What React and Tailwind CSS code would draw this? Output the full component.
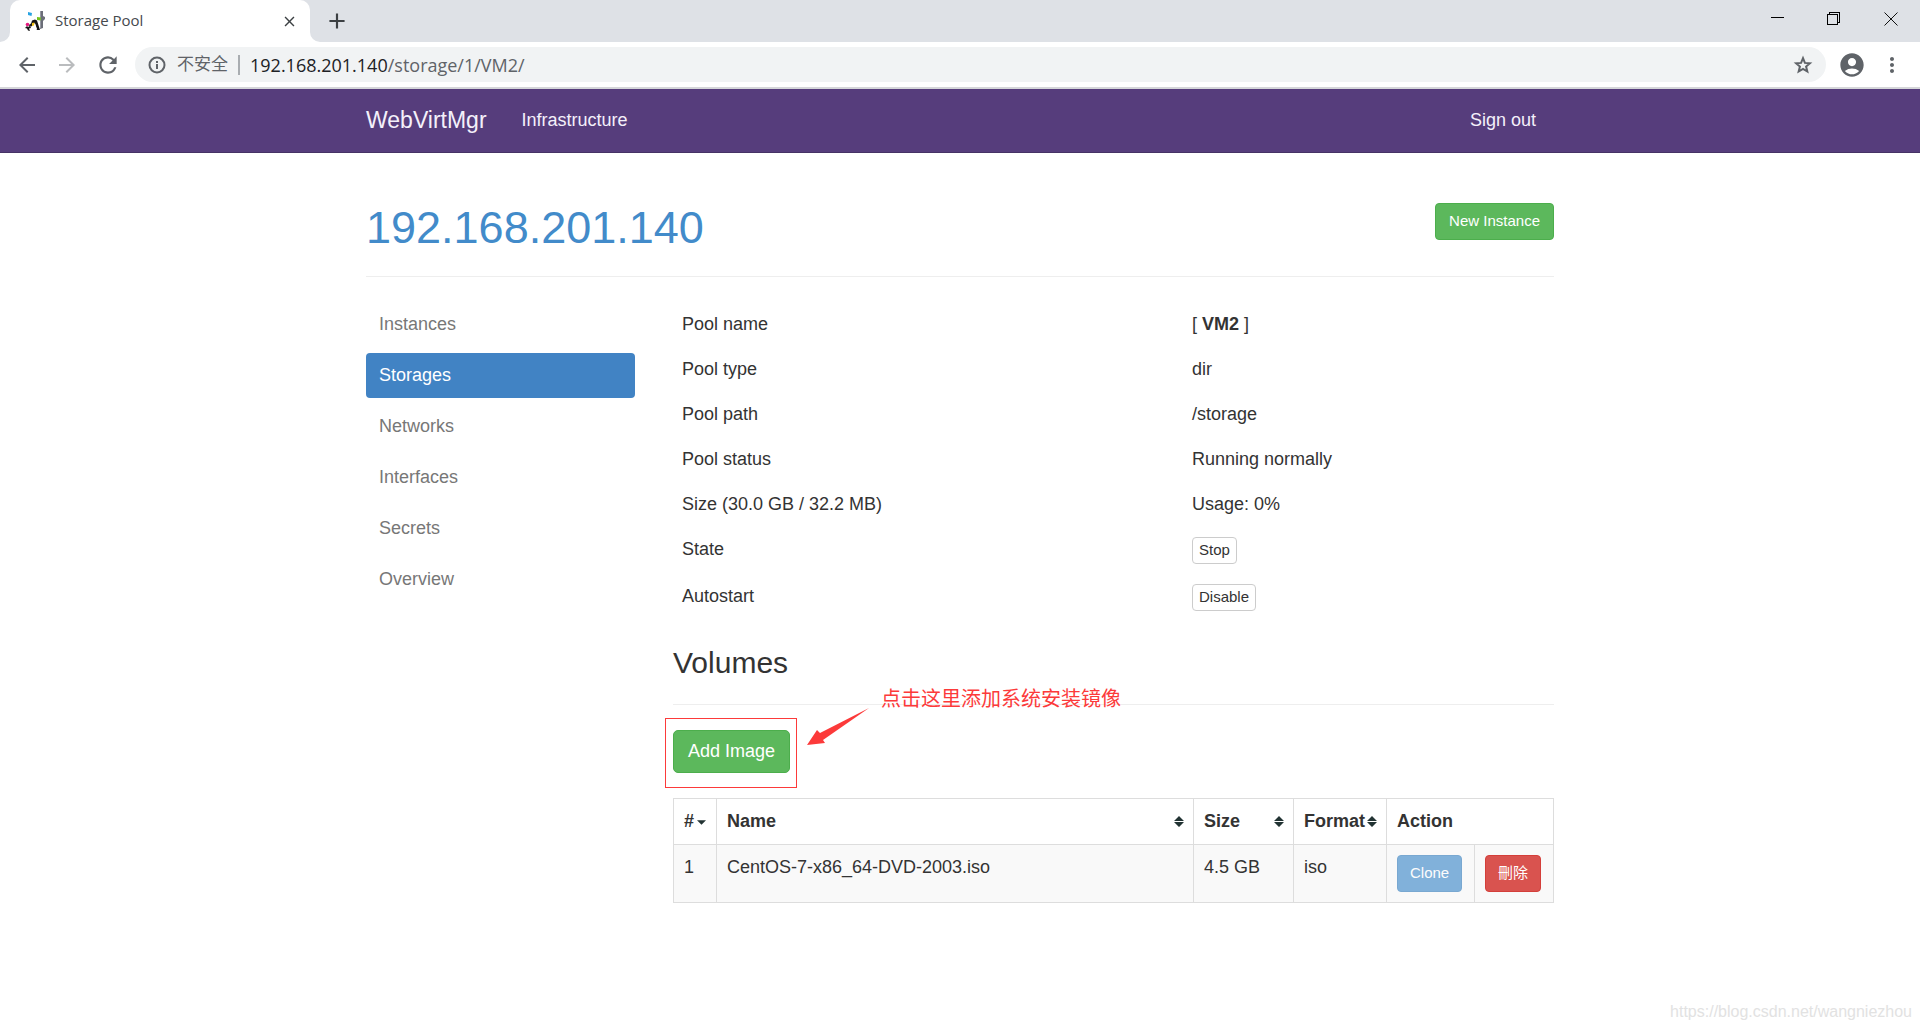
import {
  MdAccountCircle,
  MdAdd,
  MdArrowBack,
  MdArrowForward,
  MdClose,
  MdMoreVert,
  MdRefresh,
} from 'react-icons/md'

const menu = ['Instances', 'Storages', 'Networks', 'Interfaces', 'Secrets', 'Overview']

const smallButton = 'rounded-[4px] border border-[#ccc] bg-white px-1.5 pb-0.5 text-[15px] leading-[23px] text-[#333]'

const poolInfo = [
  { label: 'Pool name', value: <>[ <strong>VM2</strong> ]</> },
  { label: 'Pool type', value: 'dir' },
  { label: 'Pool path', value: '/storage' },
  { label: 'Pool status', value: 'Running normally' },
  { label: 'Size (30.0 GB / 32.2 MB)', value: 'Usage: 0%' },
  { label: 'State', value: <button type="button" className={smallButton}>Stop</button> },
  { label: 'Autostart', value: <button type="button" className={smallButton}>Disable</button> },
]

const volumes = [{ id: 1, name: 'CentOS-7-x86_64-DVD-2003.iso', size: '4.5 GB', format: 'iso' }]

function Favicon() {
  return (
    <svg width="20" height="20" viewBox="0 0 20 20" aria-hidden="true">
      <path d="M15 0h3v5l2 1v2l-2 2v7l-3 1z" fill="#6b6e78" />
      <path d="M15 0h1v17h-1z" fill="#9497a1" />
      <path d="M3 1l4 1-.5 3L3 4z" fill="#27a3e2" />
      <path d="M12 6l4 .5-.5 3-3.500-.5z" fill="#76c21c" />
      <path d="M7 9.500l3-1 2 1 3 9.500h-3.500l.5-1-2-5.500-1.500 0-2 3-1-1z" fill="#151515" />
      <path d="M0 17l2-2 1 1 2-1 1 2-2 .5 1 2.500-2-.5-1-2z" fill="#151515" />
      <path d="M8 13l2-.5 1.500 5.500-2 1-3-2z" fill="#fff" />
      <circle cx="2.500" cy="13.500" r="1.800" fill="#e5197f" />
      <path d="M4 14l2.500-2v3l-2 1z" fill="#222" />
      <path d="M7 12l2.500-.5-.5 3-2 .5z" fill="#f3c416" />
    </svg>
  )
}

function InfoIcon() {
  return (
    <svg width="20" height="20" viewBox="0 0 20 20" fill="none" stroke="currentColor" strokeWidth="2" aria-hidden="true">
      <circle cx="10" cy="10" r="7.500" />
      <path d="M10 9v5M10 6v2" />
    </svg>
  )
}

function StarIcon() {
  return (
    <svg width="22" height="22" viewBox="0 0 22 22" fill="none" stroke="currentColor" strokeWidth="2" aria-hidden="true">
      <path d="M11 4.200l1.900 4.700 5 .4-3.800 3.300 1.200 4.900-4.300-2.600-4.300 2.600 1.200-4.900-3.800-3.300 5-.4z" />
    </svg>
  )
}

function TabBar() {
  return (
    <div className="flex h-[42px] items-stretch bg-[#dee1e6] pl-[10px]">
      <div className="relative flex w-[300px] items-center rounded-t-[10px] bg-white pr-3 pl-[15px]">
        <svg className="absolute bottom-0 -left-[10px]" width="10" height="10" aria-hidden="true">
          <path d="M10 0v10H0A10 10 0 0 0 10 0z" fill="#fff" />
        </svg>
        <svg className="absolute -right-[10px] bottom-0" width="10" height="10" aria-hidden="true">
          <path d="M0 0v10h10A10 10 0 0 1 0 0z" fill="#fff" />
        </svg>
        <Favicon />
        <span className="ml-[10px] flex-1 font-['Open_Sans',sans-serif] text-[15px] text-[#45494d]">Storage Pool</span>
        <button type="button" aria-label="Close tab">
          <MdClose size={17} color="#3c4043" />
        </button>
      </div>
      <button type="button" aria-label="New tab" className="ml-[14px]">
        <MdAdd size={26} color="#3c4043" />
      </button>
      <div className="mr-[22px] ml-auto flex h-[37px] items-center gap-[43px]">
        <button type="button" aria-label="Minimize">
          <svg width="13" height="13" shapeRendering="crispEdges"><path d="M0 5h13v1H0z" /></svg>
        </button>
        <button type="button" aria-label="Restore">
          <svg width="14" height="14" fill="none" stroke="#000" shapeRendering="crispEdges">
            <path d="M.5 2.500h10v10H.5zM2.500 2V.5h10v10H11" />
          </svg>
        </button>
        <button type="button" aria-label="Close">
          <svg width="14" height="14" stroke="#111"><path d="M.5 .5l13 13M13.500 .5l-13 13" /></svg>
        </button>
      </div>
    </div>
  )
}

function AddressBar() {
  return (
    <div className="flex h-[47px] items-center border-b-2 border-[#d5d6d9] bg-white pr-4 pl-[15px] text-[#5f6368]">
      <div className="flex items-center gap-4">
        <button type="button" aria-label="Back"><MdArrowBack size={24} /></button>
        <button type="button" aria-label="Forward" className="text-[#babcbe]"><MdArrowForward size={24} /></button>
        <button type="button" aria-label="Reload"><MdRefresh size={26} /></button>
      </div>
      <div className="ml-[14px] flex h-[35px] flex-1 items-center rounded-full bg-[#f1f3f4] pr-3 pl-3 font-['Open_Sans','Noto_Sans_CJK_SC',sans-serif]">
        <InfoIcon />
        <span className="ml-[10px] text-[17px]">不安全</span>
        <span className="mx-[10px] h-5 w-0.5 bg-[#a9adb1]" />
        <span className="flex-1 text-lg leading-6">
          <span className="text-[#202124]">192.168.201.140</span>/storage/1/VM2/
        </span>
        <button type="button" aria-label="Bookmark"><StarIcon /></button>
      </div>
      <button type="button" aria-label="Profile" className="ml-3"><MdAccountCircle size={28} /></button>
      <button type="button" aria-label="Menu" className="ml-[14px]"><MdMoreVert size={24} /></button>
    </div>
  )
}

function Navbar() {
  return (
    <nav className="border-b border-[#463265] bg-[#563d7c] text-[#f4f0fa]">
      <div className="mx-auto flex h-[63px] max-w-[1188px] items-center text-lg">
        <a href="#home" className="text-[23px]">WebVirtMgr</a>
        <a href="#infrastructure" className="ml-[35px] pb-0.5">Infrastructure</a>
        <a href="#logout" className="mr-[18px] ml-auto pb-0.5">Sign out</a>
      </div>
    </nav>
  )
}

function Sidebar() {
  return (
    <ul className="flex w-[269px] shrink-0 flex-col gap-1.5">
      {menu.map((item) => (
        <li key={item}>
          <a
            href={`#${item.toLowerCase()}`}
            className={`block rounded-[4px] px-[13px] py-[10px] leading-[25px] ${
              item === 'Storages' ? 'bg-[#4183c4] text-white' : 'text-[#777]'
            }`}
          >
            {item}
          </a>
        </li>
      ))}
    </ul>
  )
}

function SortIcon({ sorted }) {
  return (
    <svg width="10" height="12" viewBox="0 0 10 12" fill="#233" aria-hidden="true">
      {sorted ? <path d="M0 4h10L5 9z" /> : <path d="M0 5h10L5 0zM0 6h10L5 11z" />}
    </svg>
  )
}

function VolumeTable() {
  const head = 'border border-[#ddd] p-[10px] text-left font-bold'
  const cell = 'border border-[#ddd] p-[10px] align-top'
  const action = 'rounded-[4px] border px-3 pb-0.5 text-[15px] leading-[33px] text-white'

  return (
    <table className="mt-[25px] w-full table-fixed border-collapse leading-[25px]">
      <colgroup>
        <col className="w-[43px]" />
        <col />
        <col className="w-[100px]" />
        <col className="w-[93px]" />
        <col className="w-[88px]" />
        <col className="w-[79px]" />
      </colgroup>
      <thead>
        <tr>
          <th className={head}>
            <span className="flex items-center gap-[3px]"># <SortIcon sorted /></span>
          </th>
          {['Name', 'Size', 'Format'].map((title) => (
            <th key={title} className="border border-[#ddd] py-[10px] pr-[9px] pl-[10px] text-left font-bold">
              <span className="flex items-center justify-between">{title} <SortIcon /></span>
            </th>
          ))}
          <th className={head} colSpan={2}>Action</th>
        </tr>
      </thead>
      <tbody>
        {volumes.map((v) => (
          <tr key={v.id} className="bg-[#f9f9f9]">
            <td className={cell}>{v.id}</td>
            <td className={cell}>{v.name}</td>
            <td className={cell}>{v.size}</td>
            <td className={cell}>{v.format}</td>
            <td className={cell}>
              <button type="button" className={`${action} block border-[#357ebd] bg-[#428bca] opacity-65`}>Clone</button>
            </td>
            <td className={cell}>
              <button type="button" className={`${action} block border-[#d43f3a] bg-[#d9534f]`}>刪除</button>
            </td>
          </tr>
        ))}
      </tbody>
    </table>
  )
}

function AddImage() {
  return (
    <div className="relative mt-[25px] w-fit">
      <button
        type="button"
        className="block rounded-[5px] border border-[#4cae4c] bg-[#5cb85c] px-[14px] leading-[41px] text-white"
      >
        Add Image
      </button>
      {/* callout over the button */}
      <span className="pointer-events-none absolute -top-3 -right-[7px] -bottom-[15px] -left-2 border border-[#fc3a3a]" />
      <svg className="absolute -top-[23px] left-[134px]" width="62" height="38" aria-hidden="true">
        <path d="M0 38L10 23l3 3L62 1 16 33l2 3z" fill="#fc3a3a" />
      </svg>
      <span className="absolute -top-[41px] left-[208px] text-xl leading-5 whitespace-nowrap text-[#fc3a3a]">
        点击这里添加系统安装镜像
      </span>
    </div>
  )
}

export default function App() {
  return (
    <div className="relative min-h-screen bg-white font-['Liberation_Sans','Noto_Sans_CJK_SC',sans-serif] text-lg text-[#333]">
      <header>
        <TabBar />
        <AddressBar />
      </header>
      <Navbar />
      <div className="mx-auto max-w-[1188px]">
        <div className="mt-[50px] flex items-start justify-between border-b border-[#eee] pb-[23px]">
          <h1 className="text-[45px] leading-[50px]">
            <a href="#host" className="text-[#428bca]">192.168.201.140</a>
          </h1>
          <button
            type="button"
            className="rounded-[4px] border border-[#4cae4c] bg-[#5cb85c] px-[13px] pb-0.5 text-[15px] leading-[33px] text-white"
          >
            New Instance
          </button>
        </div>
        <div className="mt-[25px] flex gap-[38px]">
          <Sidebar />
          <main className="min-w-0 flex-1">
            <table className="w-full table-fixed leading-[25px]">
              <tbody>
                {poolInfo.map((row) => (
                  <tr key={row.label}>
                    <td className="w-[509px] py-[10px] pr-[10px] pl-[9px] align-top">{row.label}</td>
                    <td className="p-[10px] align-top">
                      <div className="flex whitespace-pre">
                        <span className="flex">{row.value}</span>
                      </div>
                    </td>
                  </tr>
                ))}
              </tbody>
            </table>
            <h2 className="mt-[25px] border-b border-[#eee] pb-[25px] text-[30px] leading-[33px]">Volumes</h2>
            <AddImage />
            <VolumeTable />
          </main>
        </div>
      </div>
      <p className="absolute right-2 bottom-1.5 text-base text-[#e2e2e2]">https://blog.csdn.net/wangniezhou</p>
    </div>
  )
}
